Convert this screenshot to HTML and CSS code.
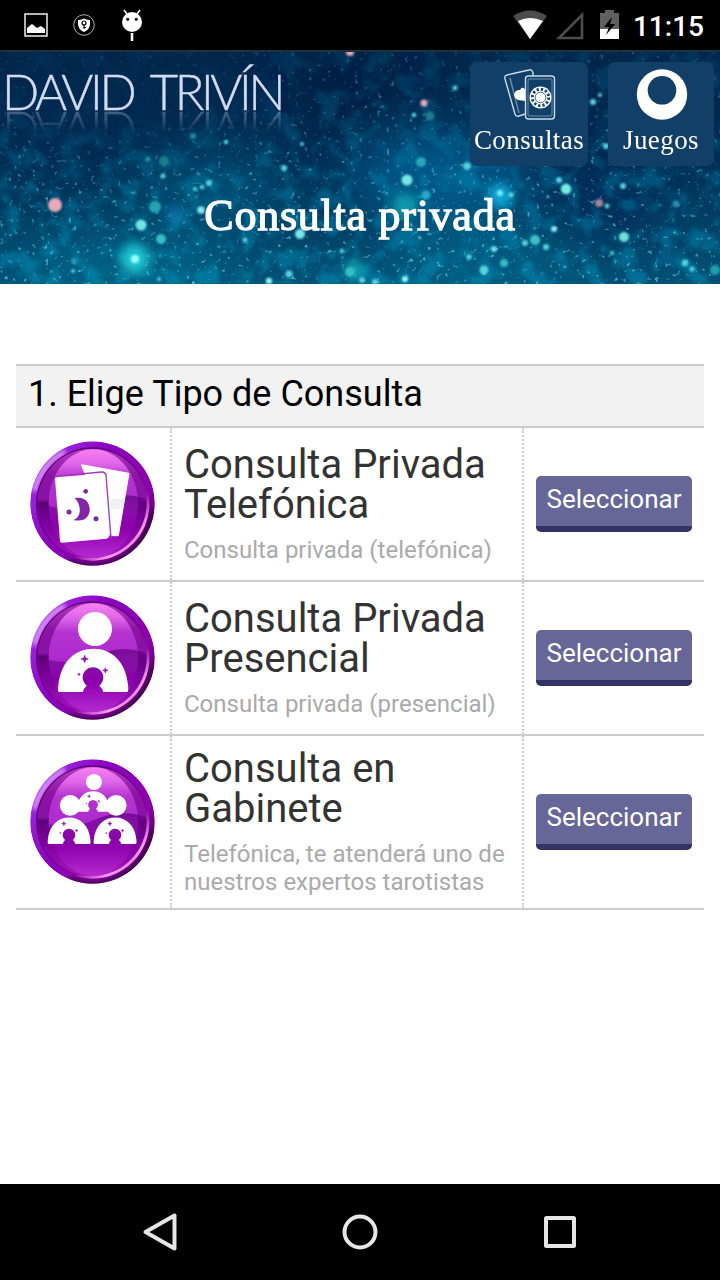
FILE: index.html
```html
<!DOCTYPE html>
<html lang="es">
<head>
<meta charset="utf-8">
<title>Consulta privada</title>
<link rel="stylesheet" href="styles.css">
</head>
<body>
<svg class="defs" width="0" height="0" aria-hidden="true">
  <defs>
    <linearGradient id="rim" x1="0" y1=".2" x2="1" y2=".85">
      <stop offset="0" stop-color="#b65cf0"/><stop offset=".12" stop-color="#9a20dc"/><stop offset=".4" stop-color="#8a00bd"/><stop offset=".75" stop-color="#8d00ae"/><stop offset="1" stop-color="#3c0044"/>
    </linearGradient>
    <linearGradient id="bevel" x1=".1" y1=".05" x2=".9" y2=".95">
      <stop offset="0" stop-color="#4b0060"/><stop offset=".45" stop-color="#720096"/><stop offset=".7" stop-color="#8a08a0"/><stop offset=".87" stop-color="#ff9cf4"/><stop offset="1" stop-color="#c653d0"/>
    </linearGradient>
    <linearGradient id="well" x1="0" y1="0" x2="0" y2="1">
      <stop offset="0" stop-color="#b23bc0"/><stop offset=".25" stop-color="#8b14a3"/><stop offset=".46" stop-color="#8912a8"/><stop offset=".5" stop-color="#560070"/><stop offset=".65" stop-color="#790099"/><stop offset="1" stop-color="#a615c0"/>
    </linearGradient>
    <linearGradient id="lens" x1="0" y1="0" x2="0" y2="1">
      <stop offset="0" stop-color="#f680f2"/><stop offset=".13" stop-color="#e067ea"/><stop offset=".27" stop-color="#b333cf"/><stop offset=".5" stop-color="#ae2bcf"/><stop offset=".7" stop-color="#9300b4"/><stop offset="1" stop-color="#b52bd0"/>
    </linearGradient>
    <linearGradient id="shade" x1="0" y1="0" x2="0" y2="1">
      <stop offset="0" stop-color="#650083" stop-opacity=".75"/><stop offset="1" stop-color="#8e00af" stop-opacity="0"/>
    </linearGradient>
    <filter id="soft"><feGaussianBlur stdDeviation="6"/></filter>
    <clipPath id="round"><circle cx="187.5" cy="187.5" r="187"/></clipPath>
    <symbol id="orb" viewBox="0 0 375 375">
      <g clip-path="url(#round)">
        <circle cx="187.500" cy="187.500" r="187" fill="url(#rim)"/>
        <path d="M14 150A177 177 0 0 1 105 32" fill="none" stroke="#e5a0fb" stroke-width="14" filter="url(#soft)"/>
        <path d="M120 358A177 177 0 0 0 366 210" fill="none" stroke="#400049" stroke-width="14" filter="url(#soft)"/>
      </g>
      <circle cx="188" cy="189" r="170" fill="url(#bevel)"/>
      <circle cx="186" cy="187" r="164" fill="url(#well)"/>
      <ellipse cx="190" cy="188" rx="134" ry="163" fill="url(#lens)"/>
      <path d="M24 184Q90 215 175 190Q270 145 348 175Q350 265 270 325Q160 365 76 308Q25 250 24 184Z" fill="url(#shade)"/>
    </symbol>
    <symbol id="person" viewBox="0 0 214 244">
      <circle cx="112" cy="51" r="51" fill="#fff"/>
      <path d="M4 240Q-1 240 2 220C10 145 55 110 108 110S204 148 211 218Q214 240 207 240H137Q134 228 125 221A31 31 0 1 0 87 221Q78 228 76 240Z" fill="#fff"/>
      <path d="M81 130l3 8 8 3-8 3-3 8-3-8-8-3 8-3ZM143 167l2 6 6 2-6 2-2 6-2-6-6-2 6-2ZM64 183l1 3 3 1-3 1-1 3-1-3-3-1 3-1Z" fill="#8c1ca9" stroke="#8c1ca9" stroke-width="2"/>
    </symbol>
  </defs>
</svg>

<div class="statusbar">
  <svg width="150" height="50" viewBox="0 0 150 50">
    <rect x="25" y="14" width="22" height="22" fill="none" stroke="#eee" stroke-width="1.5"/>
    <path d="M27 32V28L32 24 37 28 41 26 45 29V33H27Z" fill="#fff"/>
    <circle cx="84" cy="25" r="10.3" fill="none" stroke="#aaa" stroke-width="1"/>
    <path d="M78 20Q81 20 84 18.5 87 20 90 20V24Q90 29 84 32 78 29 78 24Z" fill="#fff"/>
    <circle cx="84" cy="23" r="2" fill="none" stroke="#000" stroke-width="1.2"/><path d="M84 25V29M84 27.5h2" stroke="#000" stroke-width="1.2"/>
    <circle cx="132" cy="22" r="10" fill="#fff"/>
    <path d="M127 14L124 10M137 14L140 10" stroke="#fff" stroke-width="1.5"/><path d="M132 33V41" stroke="#fff" stroke-width="2.6"/>
    <circle cx="127.7" cy="19.3" r="1.5"/><circle cx="136.2" cy="19.3" r="1.5"/>
  </svg>
  <div class="status-right">
    <svg width="110" height="50" viewBox="510 0 110 50">
      <path d="M513 16Q530 5 547 16L530 39Z" fill="#4c4c4c"/><path d="M518 21Q530 15 543 21L530 39Z" fill="#fff"/>
      <path d="M559 38L582 15V38Z" fill="none" stroke="#4c4c4c" stroke-width="2.6"/>
      <path d="M600 13H605V10H614V13H619V30H600Z" fill="#606060"/><path d="M600 29H619V39H600Z" fill="#fff"/>
      <path d="M612 17L604 27H609L606 35 615 24H610Z" fill="#000"/>
    </svg>
    <span class="clock">11:15</span>
  </div>
</div>

<header class="hero">
  <svg class="sky" width="720" height="234" viewBox="0 0 720 234" aria-hidden="true">
    <defs>
      <linearGradient id="night" x1="0" y1="0" x2="0" y2="1">
        <stop offset="0" stop-color="#03254a"/><stop offset=".45" stop-color="#022c54"/><stop offset="1" stop-color="#045276"/>
      </linearGradient>
      <filter id="glow" x="-50%" y="-50%" width="200%" height="200%"><feGaussianBlur stdDeviation="24"/></filter>
      <filter id="edge"><feGaussianBlur stdDeviation="1"/></filter>
      <filter id="halo" x="-100%" y="-100%" width="300%" height="300%"><feGaussianBlur stdDeviation="6"/></filter>
      <filter id="dust" x="0" y="0" width="100%" height="100%">
        <feTurbulence type="fractalNoise" baseFrequency=".22" numOctaves="2" seed="8"/>
        <feColorMatrix values="0 0 0 0 .12  0 0 0 0 .64  0 0 0 0 .78  5 3 0 0 -4.9"/>
        <feGaussianBlur stdDeviation=".7"/>
      </filter>
      <filter id="haze" x="0" y="0" width="100%" height="100%">
        <feTurbulence type="fractalNoise" baseFrequency=".05" numOctaves="4" seed="21"/>
        <feColorMatrix values="0 0 0 0 .0  0 0 0 0 .38  0 0 0 0 .62  0 4 0 0 -1.8"/>
        <feGaussianBlur stdDeviation="1"/>
      </filter>
      <linearGradient id="fade" x1="0" y1="0" x2="0" y2="1"><stop offset="0" stop-color="#555"/><stop offset=".4" stop-color="#999"/><stop offset="1" stop-color="#fff"/></linearGradient>
      <mask id="lower"><rect width="720" height="234" fill="url(#fade)"/><ellipse cx="130" cy="45" rx="160" ry="48" fill="#000" opacity=".8" filter="url(#glow)"/></mask>
    </defs>
    <rect width="720" height="234" fill="url(#night)"/>
    <g filter="url(#glow)">
      <ellipse cx="130" cy="215" rx="110" ry="25" fill="#087b9b" opacity=".6"/><ellipse cx="210" cy="135" rx="80" ry="30" fill="#086b91" opacity=".5"/>
      <ellipse cx="440" cy="125" rx="85" ry="40" fill="#0873a9" opacity=".65"/><ellipse cx="480" cy="210" rx="100" ry="30" fill="#057da0" opacity=".4"/>
      <ellipse cx="590" cy="155" rx="60" ry="45" fill="#022b59" opacity=".7"/><ellipse cx="345" cy="35" rx="60" ry="55" fill="#001c3c" opacity=".5"/>
    </g>
    <g mask="url(#lower)"><rect width="720" height="234" filter="url(#haze)" opacity=".4"/><rect width="720" height="234" filter="url(#dust)" opacity=".75"/></g>
    <g filter="url(#halo)"><circle cx="135" cy="209" r="14" fill="#20d0d8"/><circle cx="500" cy="145" r="12" fill="#0cadde"/><circle cx="404" cy="155" r="12" fill="#119fb0"/><circle cx="355" cy="220" r="9" fill="#18b8c4"/><circle cx="175" cy="165" r="9" fill="#1284c6" opacity=".7"/></g>
    <g filter="url(#edge)" fill="#55d4df">
      <g fill="#e8a9b8"><circle cx="55" cy="155" r="7"/><circle cx="350" cy="2" r="4"/><circle cx="424" cy="53" r="3.5"/><circle cx="599" cy="153" r="4" opacity=".7"/></g>
      <circle cx="375" cy="232" r="3"/><circle cx="141" cy="175" r="5.5" fill="#70e5e5"/><circle cx="155" cy="157" r="6" fill="#25a4b6"/><circle cx="161" cy="189" r="5" fill="#38bec8"/><circle cx="164" cy="111" r="5" fill="#157f90"/><circle cx="163" cy="126" r="2.5"/><circle cx="135" cy="209" r="4" fill="#98ffff"/><circle cx="148" cy="109" r="2.5" fill="#278f9d"/><circle cx="209" cy="133" r="3"/><circle cx="202" cy="137" r="2.3"/><circle cx="195" cy="139" r="2"/><circle cx="284" cy="118" r="3"/><circle cx="201" cy="160" r="3.8" fill="#86e5ee"/><circle cx="300" cy="184" r="5" fill="#78e8eb"/><circle cx="245" cy="190" r="2.5"/><circle cx="289" cy="224" r="3.5"/><circle cx="269" cy="231" r="3.2" fill="#8af5f4"/><circle cx="342" cy="201" r="2.3"/><circle cx="350" cy="222" r="5" fill="#32bec5"/><circle cx="159" cy="229" r="2"/><circle cx="74" cy="211" r="3" fill="#249eaf"/><circle cx="73" cy="221" r="2"/><circle cx="193" cy="86" r="3" fill="#1c8997"/><circle cx="226" cy="92" r="2.3"/><circle cx="302" cy="94" r="2"/>
      <circle cx="407" cy="130" r="5.5" fill="#75e7e1"/><circle cx="421" cy="112" r="5" fill="#26a8b8"/><circle cx="467" cy="116" r="3.8"/><circle cx="426" cy="145" r="4.5" fill="#26a9c6"/><circle cx="430" cy="66" r="4.5" fill="#1d7a91"/><circle cx="414" cy="65" r="2.3"/><circle cx="455" cy="38" r="2.4"/><circle cx="500" cy="143" r="3" fill="#75ecff"/><circle cx="511" cy="145" r="2.7"/><circle cx="566" cy="139" r="5.2" fill="#78ece2"/><circle cx="559" cy="130" r="3"/><circle cx="623" cy="136" r="3"/><circle cx="607" cy="156" r="2.4"/><circle cx="624" cy="187" r="5" fill="#73dfdf"/><circle cx="554" cy="179" r="3" fill="#8aefff"/><circle cx="535" cy="190" r="5" fill="#40c0c3"/><circle cx="525" cy="193" r="3"/><circle cx="546" cy="197" r="3"/><circle cx="494" cy="199" r="3" fill="#73e4f0"/><circle cx="484" cy="220" r="4.5"/><circle cx="504" cy="213" r="4" fill="#3bbac3"/><circle cx="469" cy="207" r="2.7"/><circle cx="405" cy="229" r="3" fill="#92ffff"/><circle cx="362" cy="230" r="3"/><circle cx="612" cy="203" r="2"/><circle cx="685" cy="213" r="3.2"/><circle cx="692" cy="219" r="2.5"/><circle cx="715" cy="220" r="5" fill="#229dae"/><circle cx="676" cy="154" r="3.5" fill="#268eac"/><circle cx="606" cy="96" r="3"/><circle cx="593" cy="52" r="3"/><circle cx="600" cy="45" r="2"/>
    </g>
    <path d="M0 1H720" stroke="#1a333c" stroke-width="2"/>
  </svg>
  <div class="topline">
    <div class="logo">DAVID TRIVÍN</div>
    <nav class="menu">
      <a class="tile tile-wide">
        <svg width="54" height="54" viewBox="0 0 54 54">
          <g fill="none" stroke="#c9dceb" stroke-width="1.4"><path d="M31 8V5Q30 1 27 2L5 7Q2 8 3 11L13 46Q14 49 17 48L23 46"/><path d="M8 10L17 45" opacity=".5"/><rect x="23.500" y="8" width="29" height="43" rx="3"/><rect x="26" y="11" width="24" height="37" rx="2" opacity=".35"/></g>
          <path d="M23 33L16 32C9 28 13 21 18 22 20 18 23 20 23 22Z" fill="#fff"/>
          <circle cx="38.500" cy="29.500" r="11" fill="#fff"/><circle cx="38.500" cy="29.500" r="8.200" fill="none" stroke="#174875" stroke-width="3" stroke-dasharray="2.300 2"/><circle cx="38.500" cy="29.500" r="5.300" fill="none" stroke="#174875" stroke-width=".8"/>
        </svg>
        <span>Consultas</span>
      </a>
      <a class="tile">
        <svg width="54" height="54" viewBox="0 0 54 54"><circle cx="28" cy="26.5" r="25.2" fill="#fff"/><circle cx="28" cy="22.3" r="14.3" fill="#123f68"/></svg>
        <span>Juegos</span>
      </a>
    </nav>
  </div>
  <h1>Consulta privada</h1>
</header>

<main>
  <h2>1. Elige Tipo de Consulta</h2>
  <section class="row">
    <div class="pic"><svg width="125" height="125" viewBox="0 0 375 375"><use href="#orb"/>
      <path d="M154 71L297 97 265 284H240Z" fill="#fff" stroke="#fff" stroke-width="3" stroke-linejoin="round"/>
      <path d="M240 177Q268 170 284 172L278 204H244Z" fill="#e7e7e7" opacity=".6"/>
      <path d="M75 106L215 93Q225 92 228 102L243 292" fill="none" stroke="#a139bd" stroke-width="4"/>
      <path d="M79 109L212 98Q221 97 223 105L237 286Q237 292 230 293L95 305Q91 305 90 300L75 114Q75 110 79 109Z" fill="#fff"/>
      <path d="M134 172C150 184 160 226 130 237C164 245 181 226 179 202C177 179 158 166 134 172Z" fill="#8425a6"/><g fill="#7d2a9e"><circle cx="167" cy="151" r="7"/><circle cx="117" cy="213" r="7.5"/><circle cx="198" cy="233" r="7.5"/></g>
    </svg></div>
    <div class="info"><h3>Consulta Privada Telefónica</h3><p>Consulta privada (telefónica)</p></div>
    <div class="action"><button>Seleccionar</button></div>
  </section>
  <section class="row">
    <div class="pic"><svg width="125" height="125" viewBox="0 0 375 375"><use href="#orb"/><use href="#person" x="83" y="51" width="214" height="244"/></svg></div>
    <div class="info"><h3>Consulta Privada Presencial</h3><p>Consulta privada (presencial)</p></div>
    <div class="action"><button>Seleccionar</button></div>
  </section>
  <section class="row">
    <div class="pic"><svg width="125" height="125" viewBox="0 0 375 375"><use href="#orb"/>
      <use href="#person" x="138" y="45" width="103" height="115"/>
      <use href="#person" x="52" y="107" width="131" height="151"/>
      <use href="#person" x="190" y="107" width="131" height="151"/>
    </svg></div>
    <div class="info"><h3>Consulta en Gabinete</h3><p>Telefónica, te atenderá uno de nuestros expertos tarotistas</p></div>
    <div class="action"><button>Seleccionar</button></div>
  </section>
</main>

<footer class="navbar">
  <svg width="40" height="40" viewBox="0 0 40 40"><path d="M5.500 20L34.500 3.500V36.500Z"/></svg>
  <svg width="40" height="40" viewBox="0 0 40 40"><circle cx="20" cy="20" r="15.500"/></svg>
  <svg width="40" height="40" viewBox="0 0 40 40"><rect x="6" y="6" width="28" height="28" rx=".5"/></svg>
</footer>
</body>
</html>
```
FILE: styles.css
```css
* { box-sizing: border-box; }
body { margin: 0; height: 1280px; display: flex; flex-direction: column; background: #fff; font-family: Roboto, sans-serif; overflow: hidden; }
svg { display: block; }
h1, h2, h3, p { margin: 0; font-weight: 400; }
.defs { position: absolute; }

.statusbar { height: 50px; background: #000; color: #fff; display: flex; justify-content: space-between; }
.status-right { display: flex; align-items: center; padding-right: 16px; gap: 13px; }
.clock { font-size: 28px; font-weight: 500; line-height: 50px; padding-top: 3px; }

.hero { position: relative; height: 234px; color: #fff; font-family: "Liberation Serif", serif; }
.sky { position: absolute; inset: 0; }
.topline { position: relative; display: flex; justify-content: space-between; padding: 12px 6px 0 2px; height: 116px; }
.logo { font-family: Lato, sans-serif; font-weight: 300; font-size: 49px; line-height: 58px; height: 50px; letter-spacing: -3.4px; word-spacing: 8px; color: #d3dcf3; -webkit-text-stroke: .4px #d3dcf3; white-space: nowrap; -webkit-box-reflect: below -2px linear-gradient(transparent 55%, rgba(255,255,255,.35)); }
.menu { display: flex; gap: 20px; }
.tile { width: 106px; height: 104px; border-radius: 7px; background: #123f68; display: flex; flex-direction: column; align-items: center; padding-top: 6px; font-size: 27px; line-height: 31px; letter-spacing: .4px; }
.tile-wide { width: 118px; }
.tile span { margin-top: 3px; }
.hero h1 { position: relative; margin-top: 26px; text-align: center; font-size: 44px; line-height: 48px; letter-spacing: .75px; -webkit-text-stroke: 1.3px #fff; }

main { margin: 80px 16px 0; flex: 1; }
h2 { height: 64px; border: solid #ccc; border-width: 2px 0; background: #f2f2f2; padding-left: 12px; font-size: 36px; line-height: 57px; color: #000; }
.row { display: grid; grid-template-columns: 156px 352px 180px; min-height: 154px; border-bottom: 2px solid #ccc; }
.row > div { display: flex; flex-direction: column; justify-content: center; }
.pic { padding: 0 0 2px 14px; border-right: 2px dotted #ccc; }
.info { padding: 13px 12px 12px; border-right: 2px dotted #ccc; }
.info h3 { font-size: 40px; line-height: 40px; color: #333; }
.info p { margin-top: 11px; font-size: 24px; line-height: 28px; color: #aaa; }
.action { padding: 0 12px; }
button { height: 56px; border: 0; border-bottom: 6px solid #336; border-radius: 5px; background: #669; color: #fff; font: 26px/46px Roboto, sans-serif; padding: 0 0 4px; white-space: nowrap; }

.navbar { height: 96px; background: #000; display: flex; justify-content: center; align-items: center; gap: 160px; }
.navbar svg { fill: none; stroke: #e6e6e6; stroke-width: 4; stroke-linejoin: round; }
```
